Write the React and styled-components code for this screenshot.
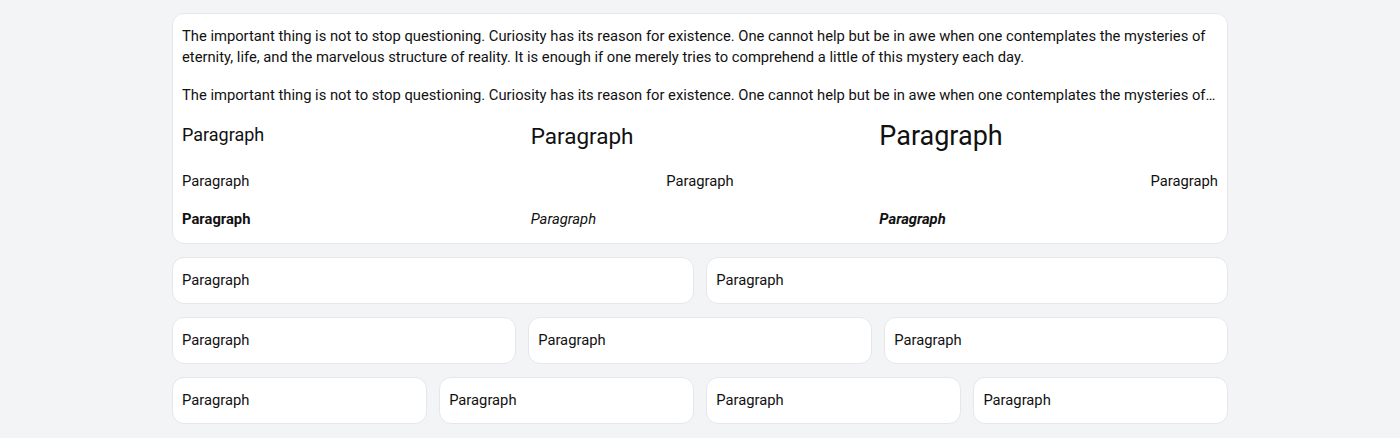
import React from "react";
import styled, { createGlobalStyle } from "styled-components";

const Global = createGlobalStyle`
  html, body { margin: 0; padding: 0; background: #f3f4f6; }
  body { font-family: Roboto, "Noto Sans", sans-serif; color: #111111; }
`;

const Page = styled.div`
  width: 1056px;
  margin: 0 auto;
  padding: 12.5px 0;
  display: flex;
  flex-direction: column;
  gap: 12.5px;
`;

const Card = styled.div`
  background: #fff;
  border: 1px solid #e5e7eb;
  border-radius: 12px;
  padding: ${(p) => (p.$main ? "12px 9px 13px" : "12px 9px")};
  min-width: 0;
`;

const Stack = styled.div`
  display: flex;
  flex-direction: column;
  gap: 16px;
`;

const Text = styled.p`
  margin: 0;
  font-size: ${(p) => p.$size || 14.75}px;
  line-height: ${(p) => p.$lh || "21.5px"};
  font-weight: ${(p) => (p.$bold ? 700 : 400)};
  font-style: ${(p) => (p.$italic ? "italic" : "normal")};
  text-align: ${(p) => p.$align || "left"};
  ${(p) =>
    p.$clamp
      ? `white-space: nowrap; overflow: hidden; text-overflow: ellipsis;`
      : ""}
`;

const Triple = styled.div`
  display: grid;
  grid-template-columns: repeat(3, 1fr);
  column-gap: 10px;
  align-items: start;
  min-height: ${(p) => p.$minH || 0}px;
`;

const Row = styled.div`
  display: grid;
  grid-template-columns: repeat(${(p) => p.$cols}, 1fr);
  gap: 12.5px;
`;

const quote =
  "The important thing is not to stop questioning. Curiosity has its reason for existence. One cannot help but be in awe when one contemplates the mysteries of eternity, life, and the marvelous structure of reality. It is enough if one merely tries to comprehend a little of this mystery each day.";

export default function App() {
  return (
    <>
      <Global />
      <Page>
        <Card $main>
          <Stack>
            <Text>{quote}</Text>
            <Text $clamp>{quote}</Text>
            <Triple $minH={33}>
              <Text $size={18} $lh="1.4">Paragraph</Text>
              <Text $size={22.5} $lh="1.3">Paragraph</Text>
              <Text $size={27} $lh="1.1">Paragraph</Text>
            </Triple>
            <Triple>
              <Text>Paragraph</Text>
              <Text $align="center">Paragraph</Text>
              <Text $align="right">Paragraph</Text>
            </Triple>
            <Triple>
              <Text $bold>Paragraph</Text>
              <Text $italic>Paragraph</Text>
              <Text $bold $italic>Paragraph</Text>
            </Triple>
          </Stack>
        </Card>
        {[2, 3, 4].map((n) => (
          <Row key={n} $cols={n}>
            {Array.from({ length: n }).map((_, i) => (
              <Card key={i}>
                <Text>Paragraph</Text>
              </Card>
            ))}
          </Row>
        ))}
      </Page>
    </>
  );
}
